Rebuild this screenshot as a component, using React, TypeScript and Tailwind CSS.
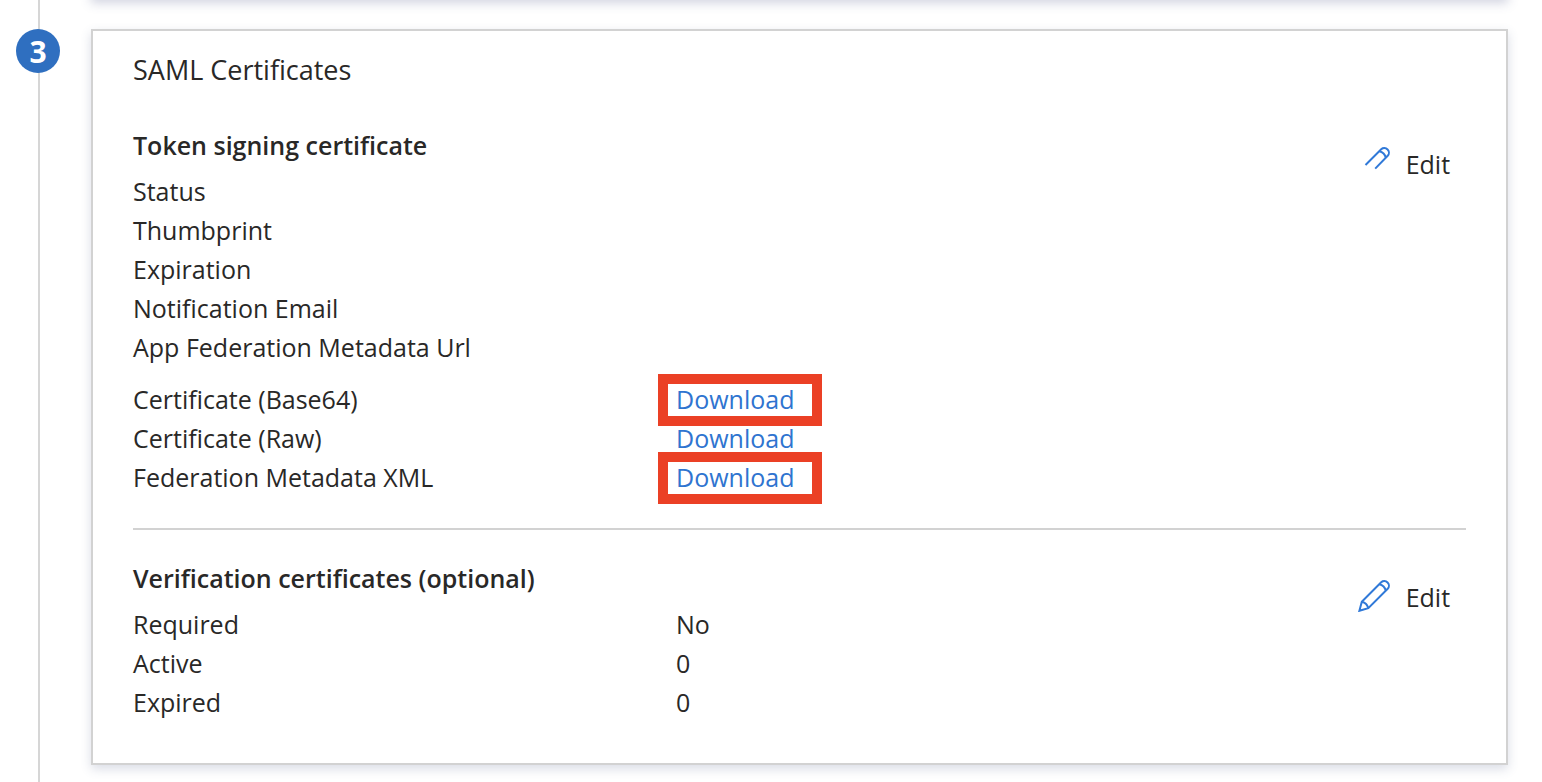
import type { ReactNode } from "react";

type Row = { label: string; value?: ReactNode; gapBefore?: boolean };

function DownloadLink({ highlighted = false }: { highlighted?: boolean }) {
  return (
    <span className="relative inline-block">
      <a href="#download" className="text-[#2f74d0]">
        Download
      </a>
      {highlighted && (
        <span className="pointer-events-none absolute -top-[6px] -left-[18px] h-[52px] w-[164px] border-[10px] border-[#eb4025]" />
      )}
    </span>
  );
}

function EditButton({ partial = false }: { partial?: boolean }) {
  return (
    <button type="button" className="flex items-center gap-4 pr-4">
      <svg className="-mt-1 h-8 w-8" viewBox="0 0 32 32" fill="none" stroke="#3079d8" strokeWidth="2" aria-hidden="true">
        {partial ? (
          <path d="M7.500 18 23.200 2.300a4.600 4.600 0 0 1 6.500 6.500L17.200 21.600M21.300 4.200c3.400.8 5.700 3 6.500 6.500" />
        ) : (
          <path d="M3.800 21.700 23.200 2.300a4.600 4.600 0 0 1 6.500 6.500L10.300 28.200 1.400 30.800ZM21.300 4.200c3.400.8 5.700 3 6.500 6.500M3.800 21.700c3.500.8 5.700 3 6.500 6.500" />
        )}
      </svg>
      <span>Edit</span>
    </button>
  );
}

function Section({ title, rows, partialIcon }: { title: string; rows: Row[]; partialIcon?: boolean }) {
  return (
    <section className="flex items-start justify-between">
      <div className="grow">
        <h3 className="mb-[7px] font-semibold">{title}</h3>
        <table className="w-full table-fixed text-left">
          <tbody>
            {rows.map((row) => (
              <tr key={row.label}>
                <th scope="row" className={row.gapBefore ? "w-[543px] pt-[13px] font-normal" : "w-[543px] font-normal"}>
                  {row.label}
                </th>
                <td className={row.gapBefore ? "pt-[13px]" : ""}>{row.value}</td>
              </tr>
            ))}
          </tbody>
        </table>
      </div>
      <div className="pt-[19px]">
        <EditButton partial={partialIcon} />
      </div>
    </section>
  );
}

const signingRows: Row[] = [
  { label: "Status" },
  { label: "Thumbprint" },
  { label: "Expiration" },
  { label: "Notification Email" },
  { label: "App Federation Metadata Url" },
  { label: "Certificate (Base64)", value: <DownloadLink highlighted />, gapBefore: true },
  { label: "Certificate (Raw)", value: <DownloadLink /> },
  { label: "Federation Metadata XML", value: <DownloadLink highlighted /> },
];

const verificationRows: Row[] = [
  { label: "Required", value: "No" },
  { label: "Active", value: "0" },
  { label: "Expired", value: "0" },
];

export default function App() {
  return (
    <main className="flex min-h-screen overflow-hidden bg-white pr-[34px] font-['Open_Sans','Noto_Sans',sans-serif] text-[25px] leading-[39px] text-[#292827]">
      <div className="relative w-[91px] shrink-0">
        <div className="ml-[38px] h-full w-[2px] bg-[#d6d6d6]" />
        <div className="absolute top-[29px] left-4 flex size-11 items-center justify-center rounded-full bg-[#2f6fc0] text-[30px] font-bold text-white">
          3
        </div>
      </div>
      <div className="grow">
        <div className="-mt-10 h-10 border-2 border-[#d2d2d2] shadow-[0_3px_10px_0_rgba(70,80,130,0.25)]" />
        <article className="mt-[29px] border-2 border-[#d2d2d2] bg-white px-10 pt-[19px] pb-[41px] shadow-[0_4px_10px_0_rgba(70,85,130,0.2)]">
          <h2 className="mb-[37px] text-[27px]">SAML Certificates</h2>
          <Section title="Token signing certificate" rows={signingRows} partialIcon />
          <hr className="mt-[31px] mb-[29px] border-t-2 border-[#d2d2d2]" />
          <Section title="Verification certificates (optional)" rows={verificationRows} />
        </article>
      </div>
    </main>
  );
}
